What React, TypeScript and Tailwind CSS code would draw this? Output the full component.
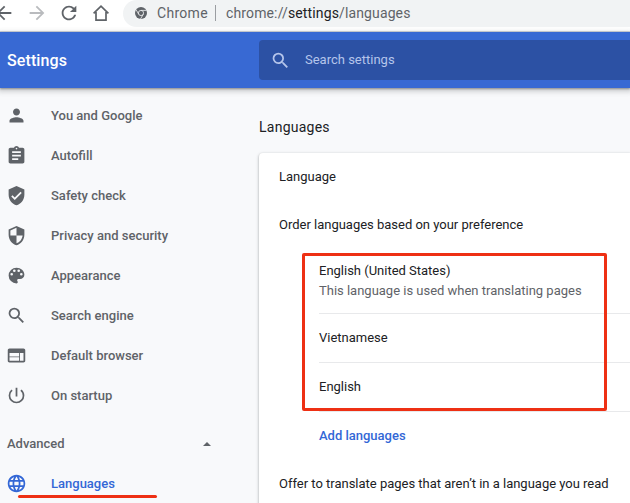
import React from 'react';

type IconProps = { d: string; className?: string };

function Icon({ d, className = 'size-[21px]' }: IconProps) {
  return (
    <svg viewBox="0 0 24 24" className={`shrink-0 ${className}`} fill="currentColor">
      <path fillRule="evenodd" d={d} />
    </svg>
  );
}

const SEARCH =
  'M15.5 14h-.79l-.28-.27A6.47 6.47 0 0 0 16 9.5 6.5 6.5 0 1 0 9.5 16c1.61 0 3.09-.59 4.23-1.57l.27.28v.79l5 4.99L20.49 19l-4.99-5zm-6 0C7.01 14 5 11.99 5 9.5S7.01 5 9.5 5 14 7.01 14 9.5 11.99 14 9.5 14z';
const BACK = 'M20 11H7.83l5.59-5.59L12 4l-8 8 8 8 1.41-1.41L7.83 13H20v-2z';
const FORWARD = 'M12 4l-1.41 1.41L16.17 11H4v2h12.17l-5.58 5.59L12 20l8-8z';
const RELOAD =
  'M17.65 6.35A7.958 7.958 0 0 0 12 4c-4.42 0-7.99 3.58-7.99 8s3.57 8 7.99 8c3.73 0 6.84-2.55 7.73-6h-2.08A5.99 5.99 0 0 1 12 18c-3.31 0-6-2.69-6-6s2.69-6 6-6c1.66 0 3.14.69 4.22 1.78L13 11h7V4l-2.35 2.35z';

const items = [
  {
    label: 'You and Google',
    d: 'M12 12c2.21 0 4-1.79 4-4s-1.79-4-4-4-4 1.79-4 4 1.79 4 4 4zm0 2c-2.67 0-8 1.34-8 4v2h16v-2c0-2.66-5.33-4-8-4z',
  },
  {
    label: 'Autofill',
    d: 'M19 3h-4.18C14.4 1.84 13.3 1 12 1c-1.3 0-2.4.84-2.82 2H5c-1.1 0-2 .9-2 2v14c0 1.1.9 2 2 2h14c1.1 0 2-.9 2-2V5c0-1.1-.9-2-2-2zm-7 0c.55 0 1 .45 1 1s-.45 1-1 1-1-.45-1-1 .45-1 1-1zm2 14H7v-2h7v2zm3-4H7v-2h10v2zm0-4H7V7h10v2z',
  },
  {
    label: 'Safety check',
    d: 'M12 1L3 5v6c0 5.55 3.84 10.74 9 12 5.16-1.26 9-6.45 9-12V5l-9-4zm-2 16l-4-4 1.41-1.41L10 14.17l6.59-6.59L18 9l-8 8z',
  },
  {
    label: 'Privacy and security',
    d: 'M12 1L3 5v6c0 5.55 3.84 10.74 9 12 5.16-1.26 9-6.45 9-12V5l-9-4zm0 10.99h7c-.53 4.12-3.28 7.79-7 8.94V12H5V6.3l7-3.11v8.8z',
  },
  {
    label: 'Appearance',
    d: 'M12 3a9 9 0 0 0 0 18c.83 0 1.5-.67 1.5-1.5 0-.39-.15-.74-.39-1.01-.23-.26-.38-.61-.38-.99 0-.83.67-1.5 1.5-1.5H16c2.76 0 5-2.24 5-5 0-4.42-4.03-8-9-8zm-5.5 9a1.5 1.5 0 1 1 0-3 1.5 1.5 0 0 1 0 3zm3-4a1.5 1.5 0 1 1 0-3 1.5 1.5 0 0 1 0 3zm5 0a1.5 1.5 0 1 1 0-3 1.5 1.5 0 0 1 0 3zm3 4a1.5 1.5 0 1 1 0-3 1.5 1.5 0 0 1 0 3z',
  },
  { label: 'Search engine', d: SEARCH },
  {
    label: 'Default browser',
    d: 'M20 4H4c-1.1 0-1.99.9-1.99 2L2 18c0 1.1.9 2 2 2h16c1.1 0 2-.9 2-2V6c0-1.1-.9-2-2-2zm-5 14H4v-4h11v4zm0-5H4V9h11v4zm5 5h-4V9h4v9z',
  },
  {
    label: 'On startup',
    d: 'M13 3h-2v10h2V3zm4.83 2.17l-1.42 1.42A6.92 6.92 0 0 1 19 12c0 3.87-3.13 7-7 7s-7-3.13-7-7c0-2.19 1.01-4.14 2.58-5.42L6.17 5.17A8.932 8.932 0 0 0 3 12a9 9 0 0 0 18 0c0-2.74-1.23-5.18-3.17-6.83z',
  },
];

const GLOBE =
  'M11.99 2C6.47 2 2 6.48 2 12s4.47 10 9.99 10C17.52 22 22 17.52 22 12S17.52 2 11.99 2zm6.93 6h-2.95a15.65 15.65 0 0 0-1.38-3.56A8.03 8.03 0 0 1 18.92 8zM12 4.04c.83 1.2 1.48 2.53 1.91 3.96h-3.82c.43-1.43 1.08-2.76 1.91-3.96zM4.26 14C4.1 13.36 4 12.69 4 12s.1-1.36.26-2h3.38c-.08.66-.14 1.32-.14 2 0 .68.06 1.34.14 2H4.26zm.82 2h2.95c.32 1.25.78 2.45 1.38 3.56A7.987 7.987 0 0 1 5.08 16zm2.95-8H5.08a7.987 7.987 0 0 1 4.33-3.56A15.65 15.65 0 0 0 8.03 8zM12 19.96c-.83-1.2-1.48-2.53-1.91-3.96h3.82c-.43 1.43-1.08 2.76-1.91 3.96zM14.34 14H9.66c-.09-.66-.16-1.32-.16-2 0-.68.07-1.35.16-2h4.68c.09.65.16 1.32.16 2 0 .68-.07 1.34-.16 2zm.25 5.56c.6-1.11 1.06-2.31 1.38-3.56h2.95a8.03 8.03 0 0 1-4.33 3.56zM16.36 14c.08-.66.14-1.32.14-2 0-.68-.06-1.34-.14-2h3.38c.16.64.26 1.31.26 2s-.1 1.36-.26 2h-3.38z';

function ChromeLogo() {
  return (
    <svg viewBox="0 0 24 24" className="size-3 shrink-0">
      <circle cx="12" cy="12" r="12" fill="#5f6368" />
      <g stroke="#f1f3f4" strokeWidth="1.6" fill="none">
        <circle cx="12" cy="12" r="5.2" />
        <path d="M12 6.8h11M7.5 14.6L2 5.2M16.5 14.6L11 24" />
      </g>
    </svg>
  );
}

function Toolbar() {
  return (
    <div className="flex h-8 shrink-0 border-b border-[#d5d8df] bg-white text-[#5f6368]">
      <div className="flex h-[26px] w-[123px] shrink-0 items-center">
        <Icon d={BACK} className="-ml-[7px] size-[22px]" />
        <Icon d={FORWARD} className="ml-[11px] size-[22px] text-[#b9bbbe]" />
        <Icon d={RELOAD} className="ml-[10px] size-[22px]" />
        <svg viewBox="0 0 18 18" className="ml-[12px] size-[18px] shrink-0" fill="none" stroke="currentColor" strokeWidth="1.7">
          <path d="M1.6 9.4L9 2.2l7.4 7.2M4 8v8.2h10V8" />
        </svg>
      </div>
      <div className="flex h-[27px] flex-1 items-center rounded-l-full bg-[#f1f3f4] pb-px pl-3 text-sm whitespace-nowrap">
        <ChromeLogo />
        <span className="ml-[10px] w-[58px] tracking-[0.3px]">Chrome</span>
        <span className="mr-[10px] h-4 w-px bg-[#9a9da1]" />
        <span className="tracking-[0.13px]">
          chrome://<span className="text-[#202124]">settings</span>/languages
        </span>
      </div>
    </div>
  );
}

function Header() {
  return (
    <header className="z-10 flex h-14 shrink-0 items-center bg-[#3869d3] shadow-[0_1px_2px_rgba(60,64,67,0.5),0_2px_5px_2px_rgba(60,64,67,0.2)]">
      <h1 className="w-[259px] pt-0.5 pl-[7px] text-base font-medium tracking-[0.1px] text-white">Settings</h1>
      <div className="flex h-10 flex-1 items-center rounded-l-sm bg-[#2c51a4] pl-[11px] text-[13px] text-[#b5c5eb]">
        <Icon d={SEARCH} />
        <span className="ml-[14px]">Search settings</span>
      </div>
    </header>
  );
}

function Sidebar() {
  return (
    <nav className="w-[259px] shrink-0 pt-2 pl-[6px] text-[13px] font-medium text-[#5f6368]">
      {items.map((item) => (
        <div key={item.label} className="flex h-10 items-center">
          <Icon d={item.d} className="mb-px size-[21px]" />
          <span className="ml-6">{item.label}</span>
        </div>
      ))}
      <div className="mt-2 flex h-10 items-center justify-between pr-[48px] pl-px">
        <span>Advanced</span>
        <span className="border-x-[4.5px] border-b-[4.5px] border-x-transparent border-b-[#5f6368]" />
      </div>
      <div className="relative flex h-10 items-center text-[#3367d6]">
        <Icon d={GLOBE} className="mb-px size-[21px]" />
        <span className="ml-6">Languages</span>
        <span className="absolute top-[31px] left-3 h-[3px] w-[139px] rounded-full bg-[#ee3014]" />
      </div>
    </nav>
  );
}

function Languages() {
  return (
    <main className="flex min-w-0 flex-1 flex-col pt-[26px] whitespace-nowrap text-[#202124]">
      <h2 className="h-[39px] shrink-0 text-sm leading-[26px] tracking-[0.25px]">Languages</h2>
      <section className="h-[360px] shrink-0 rounded-tl bg-white pl-5 text-[13px] tracking-[-0.01px] shadow-[0_1px_2px_rgba(60,64,67,0.3),0_1px_3px_1px_rgba(60,64,67,0.15)]">
        <div className="flex h-[47px] items-center">Language</div>
        <div className="flex h-12 items-center pt-px">Order languages based on your preference</div>
        <div className="relative pl-10">
          <div className="flex h-[66px] flex-col justify-center border-b border-[#e8e9eb] leading-5">
            <div>English (United States)</div>
            <div className="text-[#5f6368]">This language is used when translating pages</div>
          </div>
          <div className="flex h-[49px] items-center border-b border-[#e8e9eb]">Vietnamese</div>
          <div className="flex h-[49px] items-center border-b border-[#e8e9eb]">English</div>
          <div className="absolute top-[5px] left-[23px] h-[158px] w-[304.5px] rounded-[2px] border-3 border-[#ee3014]" />
        </div>
        <div className="flex h-12 items-center pl-10 font-medium text-[#3367d6]">Add languages</div>
        <div className="flex h-12 items-center">Offer to translate pages that aren’t in a language you read</div>
      </section>
    </main>
  );
}

export default function App() {
  return (
    <div className="flex h-[503px] w-[630px] flex-col overflow-hidden bg-[#f8f9fb] font-[Roboto,sans-serif]">
      <Toolbar />
      <Header />
      <div className="flex min-h-0 flex-1">
        <Sidebar />
        <Languages />
      </div>
    </div>
  );
}
